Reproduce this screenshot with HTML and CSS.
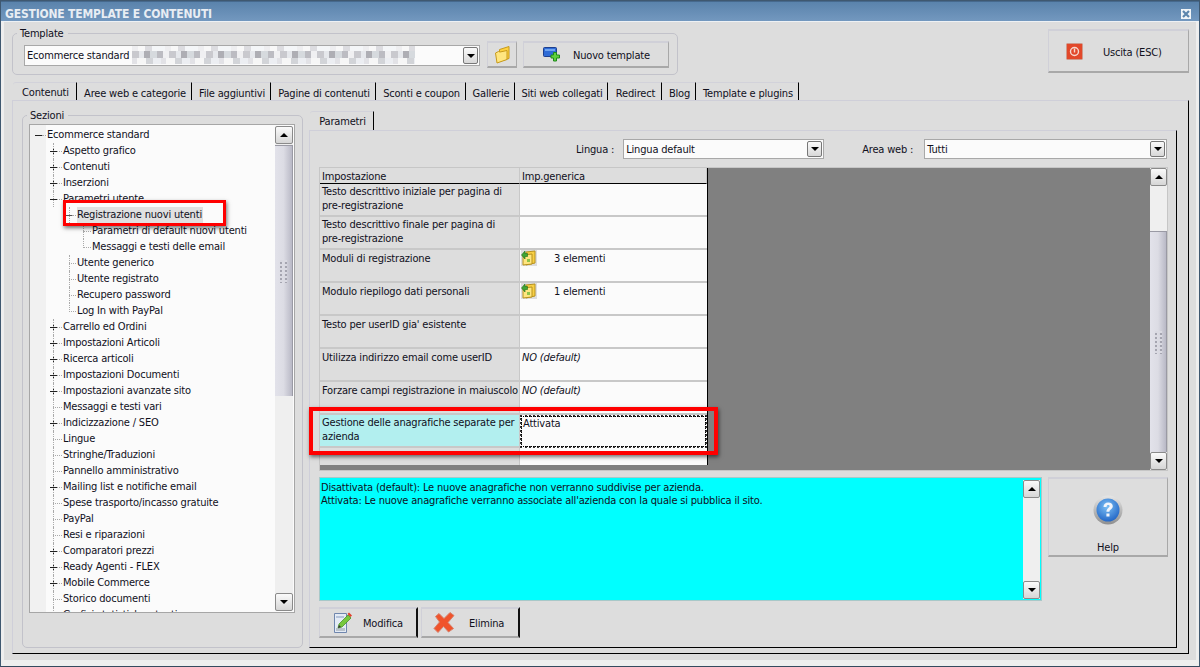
FILE: index.html
```html
<!DOCTYPE html>
<html lang="it">
<head>
<meta charset="utf-8">
<title>Gestione template e contenuti</title>
<link rel="stylesheet" href="styles.css">
</head>
<body>
<div class="window">
  <header class="titlebar">
    <span class="title">GESTIONE TEMPLATE E CONTENUTI</span>
    <span class="close"><svg width="10" height="10" viewBox="0 0 10 10"><path d="M2 2l6 6M8 2l-6 6" stroke="#5d86ad" stroke-width="2.2"/></svg></span>
  </header>
  <div class="client">
    <div class="toprow">
      <fieldset class="group template-group">
        <legend>Template</legend>
        <div class="template-row">
          <div class="combo template-combo">
            <span class="combo-text">Ecommerce standard</span>
            <span class="blur"></span>
            <span class="dd"><i class="arrow-down"></i></span>
          </div>
          <button class="btn folder-btn">
            <svg width="15" height="18" viewBox="0 0 15 18"><path d="M4.500 3.500l9.500-3v12l-9.500 3z" fill="#ffd23f" stroke="#c79a1c"/><path d="M0.500 7l3-1.500 1.500.5 7-1.500v9l-10 3.500z" fill="#ffe680" stroke="#c79a1c"/></svg>
          </button>
          <button class="btn new-btn">
            <svg width="19" height="15" viewBox="0 0 19 15"><rect x="0.500" y="0.500" width="13" height="9" rx="1" fill="#2e6bd6" stroke="#1d3f8f"/><rect x="2" y="2" width="10" height="2" fill="#6ea3f0"/><path d="M10.500 5.500h3v2.500h3v3h-3v3h-3v-3h-2.500v-3h2.500z" fill="#5fd03c" stroke="#1f8a1a"/></svg>
            <span>Nuovo template</span>
          </button>
        </div>
      </fieldset>
      <button class="btn exit-btn">
        <svg width="17" height="17" viewBox="0 0 17 17"><rect x="0.500" y="0.500" width="16" height="16" rx="1" fill="#e2482a" stroke="#cf9a8c"/><circle cx="8.500" cy="8.500" r="4" fill="none" stroke="#f7d9cf" stroke-width="1.400"/><path d="M8.500 5.500v4" stroke="#f7d9cf" stroke-width="1.400"/></svg>
        <span>Uscita (ESC)</span>
      </button>
    </div>

    <nav class="tabs main-tabs">
      <span class="tab active">Contenuti</span>
      <span class="tab">Aree web e categorie</span>
      <span class="tab">File aggiuntivi</span>
      <span class="tab">Pagine di contenuti</span>
      <span class="tab">Sconti e coupon</span>
      <span class="tab">Gallerie</span>
      <span class="tab">Siti web collegati</span>
      <span class="tab">Redirect</span>
      <span class="tab">Blog</span>
      <span class="tab">Template e plugins</span>
    </nav>

    <section class="page">
      <fieldset class="group sections">
        <legend>Sezioni</legend>
        <div class="tree-box">
          <ul class="tree">
            <li class="n l0 open">Ecommerce standard</li>
            <li class="n l1 plus">Aspetto grafico</li>
            <li class="n l1 plus">Contenuti</li>
            <li class="n l1 plus">Inserzioni</li>
            <li class="n l1 open">Parametri utente</li>
            <li class="n l2 open"><span class="selected">Registrazione nuovi utenti</span></li>
            <li class="n l3">Parametri di default nuovi utenti</li>
            <li class="n l3 last">Messaggi e testi delle email</li>
            <li class="n l2">Utente generico</li>
            <li class="n l2">Utente registrato</li>
            <li class="n l2">Recupero password</li>
            <li class="n l2 last">Log In with PayPal</li>
            <li class="n l1 plus">Carrello ed Ordini</li>
            <li class="n l1 plus">Impostazioni Articoli</li>
            <li class="n l1 plus">Ricerca articoli</li>
            <li class="n l1 plus">Impostazioni Documenti</li>
            <li class="n l1 plus">Impostazioni avanzate sito</li>
            <li class="n l1">Messaggi e testi vari</li>
            <li class="n l1 plus">Indicizzazione / SEO</li>
            <li class="n l1">Lingue</li>
            <li class="n l1">Stringhe/Traduzioni</li>
            <li class="n l1">Pannello amministrativo</li>
            <li class="n l1 plus">Mailing list e notifiche email</li>
            <li class="n l1">Spese trasporto/incasso gratuite</li>
            <li class="n l1">PayPal</li>
            <li class="n l1">Resi e riparazioni</li>
            <li class="n l1 plus">Comparatori prezzi</li>
            <li class="n l1 plus">Ready Agenti - FLEX</li>
            <li class="n l1 plus">Mobile Commerce</li>
            <li class="n l1">Storico documenti</li>
            <li class="n l1">Grafici statistiche utenti</li>
          </ul>
          <div class="sb tree-sb">
            <span class="sb-btn"><i class="arrow-up"></i></span>
            <span class="thumb tree-thumb"><i class="grip"></i></span>
            <span class="sb-rest"></span>
            <span class="sb-btn"><i class="arrow-down"></i></span>
          </div>
        </div>
      </fieldset>

      <div class="right">
        <nav class="tabs sub-tabs"><span class="tab active">Parametri</span></nav>
        <div class="subpage">
          <div class="filters">
            <label class="f-label lang-label">Lingua :</label>
            <div class="combo lang-combo"><span class="combo-text">Lingua default</span><span class="dd"><i class="arrow-down"></i></span></div>
            <label class="f-label area-label">Area web :</label>
            <div class="combo area-combo"><span class="combo-text">Tutti</span><span class="dd"><i class="arrow-down"></i></span></div>
          </div>

          <div class="gridbox">
            <div class="grid-area">
              <div class="table">
                <div class="th">Impostazione</div><div class="th">Imp.generica</div>
                <div class="k">Testo descrittivo iniziale per pagina di pre-registrazione</div><div class="v"></div>
                <div class="k">Testo descrittivo finale per pagina di pre-registrazione</div><div class="v"></div>
                <div class="k one">Moduli di registrazione</div>
                <div class="v has-icon"><span class="fold-ic"><svg width="16" height="16" viewBox="0 0 16 16"><path d="M5 2l9-1v12l-9 2z" fill="#f7cf45" stroke="#b8921e"/><path d="M2 5l9-1v10l-9 1z" fill="#ffe680" stroke="#b8921e"/><path d="M0.500 5l3.500-4v2.500h2.500v3H4v2.500z" fill="#3fa535" stroke="#1f6d1a" stroke-width=".6"/><rect x="6" y="9" width="3" height="3" fill="#8ec34a"/></svg></span><span class="count">3 elementi</span></div>
                <div class="k one">Modulo riepilogo dati personali</div>
                <div class="v has-icon"><span class="fold-ic"><svg width="16" height="16" viewBox="0 0 16 16"><path d="M5 2l9-1v12l-9 2z" fill="#f7cf45" stroke="#b8921e"/><path d="M2 5l9-1v10l-9 1z" fill="#ffe680" stroke="#b8921e"/><path d="M0.500 5l3.500-4v2.500h2.500v3H4v2.500z" fill="#3fa535" stroke="#1f6d1a" stroke-width=".6"/><rect x="6" y="9" width="3" height="3" fill="#8ec34a"/></svg></span><span class="count">1 elementi</span></div>
                <div class="k one">Testo per userID gia' esistente</div><div class="v"></div>
                <div class="k one">Utilizza indirizzo email come userID</div><div class="v one dflt">NO (default)</div>
                <div class="k one">Forzare campi registrazione in maiuscolo</div><div class="v one dflt">NO (default)</div>
                <div class="k hl">Gestione delle anagrafiche separate per azienda</div><div class="v focus">Attivata</div>
                <div class="k blank"></div><div class="v blank"></div>
              </div>
            </div>
            <div class="sb grid-sb">
              <span class="sb-btn"><i class="arrow-up"></i></span>
              <span class="sb-gap"></span>
              <span class="thumb grid-thumb"><i class="grip"></i></span>
              <span class="sb-btn"><i class="arrow-down"></i></span>
            </div>
          </div>

          <div class="lower">
            <div class="desc">
              <p class="desc-text">Disattivata (default): Le nuove anagrafiche non verranno suddivise per azienda.<br>Attivata: Le nuove anagrafiche verranno associate all'azienda con la quale si pubblica il sito.</p>
              <div class="sb desc-sb">
                <span class="sb-btn"><i class="arrow-up"></i></span>
                <span class="sb-rest"></span>
                <span class="sb-btn"><i class="arrow-down"></i></span>
              </div>
            </div>
            <button class="btn help-btn">
              <svg width="30" height="30" viewBox="0 0 30 30"><defs><radialGradient id="hg" cx="45%" cy="35%" r="70%"><stop offset="0" stop-color="#7cc0f5"/><stop offset="1" stop-color="#1f62c4"/></radialGradient><linearGradient id="hr" x1="0" y1="0" x2="0" y2="1"><stop offset="0" stop-color="#e6e6e6"/><stop offset="1" stop-color="#8f8f8f"/></linearGradient></defs><circle cx="15" cy="15" r="14.500" fill="url(#hr)"/><circle cx="15" cy="15" r="11.500" fill="url(#hg)"/><path d="M10.500 12c0-3 2-4.500 4.700-4.500 2.800 0 4.600 1.500 4.600 3.700 0 3.100-3.400 3-3.400 5.600h-3c0-3.700 3.200-3.800 3.200-5.500 0-.9-.6-1.400-1.500-1.400-1 0-1.500.6-1.600 2.100z" fill="#f2f5fb"/><rect x="13.400" y="18.500" width="3.100" height="3" fill="#f2f5fb"/></svg>
              <span>Help</span>
            </button>
          </div>

          <div class="actions">
            <button class="btn act-btn edit-btn">
              <svg width="20" height="23" viewBox="0 0 20 23"><path d="M1.500 2.500h12v19h-12z" fill="#e4ebf5" stroke="#6f86ad"/><rect x="3" y="5" width="8" height="2" fill="#b5c3da"/><rect x="3" y="17" width="9" height="3" fill="#b9c2cc"/><path d="M5 17l1-4 9-9 3 3-9 9z" fill="#77c83e" stroke="#3f8a1e" stroke-width=".7"/><path d="M14.500 3l1.500-1.500 3 3L17.500 6z" fill="#e0412b"/><path d="M5 17l1-3 2 2z" fill="#333"/></svg>
              <span>Modifica</span>
            </button>
            <button class="btn act-btn del-btn">
              <svg width="23" height="23" viewBox="0 0 23 23"><path d="M2.500 5.500l3.500-3 5 5 6-6 4 3-6 7 5.500 6-5 3.500-5-5.500-5.500 6-4-4 5.500-6.500z" fill="#f0532b" stroke="#d7806a" stroke-linejoin="round"/></svg>
              <span>Elimina</span>
            </button>
          </div>
        </div>
      </div>
    </section>
  </div>
</div>
<div class="mark mark-tree"></div>
<div class="mark mark-row"></div>
</body>
</html>
```

FILE: styles.css
```css
* { box-sizing: border-box; }
html, body { margin: 0; padding: 0; }
body {
  width: 1200px; height: 667px; overflow: hidden; position: relative;
  font: 11px/13px "DejaVu Sans Condensed", "DejaVu Sans", sans-serif;
  font-stretch: condensed;
  letter-spacing: -0.18px;
  color: #10101c; background: #ddd;
}
button { font: inherit; letter-spacing: inherit; color: inherit; padding: 0; }
ul { list-style: none; margin: 0; padding: 0; }
p { margin: 0; }
.window { width: 1200px; height: 667px; display: flex; flex-direction: column; border: 1px solid #3f5870; border-bottom-color: #34495e; background: #ddd; }
.titlebar { height: 21px; flex: none; display: flex; align-items: center; justify-content: space-between; padding: 5px 8px 0 4px; background: linear-gradient(#5a83ac, #7398bf); border-top: 1px solid #46698d; border-bottom: 1px solid #eef1f4; }
.title { color: #e8edf3; font-weight: 700; font-size: 12px; }
.close { width: 10px; height: 10px; background: #f2f5f8; display: flex; }
.client { flex: 1; border: solid #eee; border-width: 0 3px 6px 3px; display: flex; flex-direction: column; padding: 5px 7px 6px 8px; min-height: 0; }

.group { border: 1px solid #c2c2ca; border-radius: 5px; margin: 0; padding: 0; min-width: 0; }
.group legend { padding: 0 4px 0 3px; margin-left: 4px; line-height: 13px; }

.toprow { display: flex; justify-content: space-between; align-items: flex-start; height: 50px; flex: none; }
.template-group { width: 666px; height: 48px; }
.template-row { display: flex; align-items: center; padding: 1px 0 0 11px; }
.combo { display: flex; align-items: center; height: 21px; background: #fbfbfb; border: 1px solid #a8a8a8; padding-left: 2px; position: relative; }
.template-combo { width: 456px; margin-top: 2px; }
.combo-text { white-space: nowrap; }
.blur { flex: none; width: 283px; height: 18px; margin: -2px 0 0 3px; background:
  repeating-linear-gradient(90deg, #eeeef0 0 6px, #f8f8f8 6px 13px, #dcdce0 13px 20px, #f4f6f8 20px 33px) 0 0 / 100% 5px no-repeat,
  repeating-linear-gradient(90deg, #c9c9ce 0 7px, #e6e8ec 7px 12px, #aeaeb4 12px 18px, #d6dade 18px 25px, #bcbcc2 25px 31px, #f0f0f2 31px 37px) 0 5px / 100% 7px no-repeat,
  repeating-linear-gradient(90deg, #e2e2e6 0 5px, #f6f6f6 5px 14px, #d2d4d8 14px 21px, #eceef2 21px 29px) 0 12px / 100% 6px no-repeat;
}
.dd { position: absolute; right: 1px; top: 1px; width: 15px; height: 17px; display: flex; align-items: center; justify-content: center; background: linear-gradient(#fafafa, #d8d8d8); border: 1px solid #777; border-radius: 2px; }
.arrow-down, .arrow-up { display: block; width: 0; height: 0; border-left: 4px solid transparent; border-right: 4px solid transparent; }
.arrow-down { border-top: 4px solid #000; }
.arrow-up { border-bottom: 4px solid #000; }

.btn { background: #ddd; border: 1px solid; border-color: #d0d0d8 #a8a8a8 #a8a8a8 #d0d0d8; border-width: 2px 1px 2px 1px; display: flex; align-items: center; }
.folder-btn { width: 30px; height: 27px; margin-left: 7px; justify-content: center; }
.new-btn { width: 146px; height: 27px; margin-left: 6px; padding-left: 19px; gap: 11px; }
.new-btn span { margin-top: 2px; }
.exit-btn { width: 141px; height: 44px; margin-top: 2px; padding-left: 17px; gap: 20px; }
.exit-btn span { margin-top: 2px; }

.tabs { display: grid; flex: none; }
.main-tabs { height: 18px; margin-top: 5px; margin-left: 1px; grid-template-columns: 64px 115px 79px 105px 90px 49px 93px 54px 34px 103px; }
.tab { display: flex; align-items: center; justify-content: center; padding: 3px 0 0 2px; white-space: nowrap; border-right: 1px solid #000; border-top: 1px solid #d2d2da; border-radius: 3px 0 0 0; }
.tab.active { padding-top: 1px; }
.page { flex: 1; display: flex; padding: 8px 11px 5px 9px; border: 1px solid; border-color: #cfcfd9 #000 #000 #cfcfd9; gap: 6px; min-height: 0; width: 1177px; }
.sections { width: 281px; height: 539px; flex: none; position: relative; }
.tree-box { display: flex; height: 489px; margin: 2px 7px 0 6px; border: 1px solid #a6a6a6; background: #fbfbfb; overflow: hidden; }
.tree { flex: 1; padding-top: 2px; background: linear-gradient(90deg, #f1f1f1 16px, #fbfbfb 16px); overflow: hidden; }
.n { height: 16px; line-height: 16px; white-space: nowrap; position: relative; }
.l0 { padding-left: 17px; }
.l1 { padding-left: 33px; }
.l2 { padding-left: 47px; }
.l3 { padding-left: 62px; }
.n::after { content: ""; position: absolute; top: 8px; height: 0; border-top: 1px dotted #aaa; }
.n::before { content: ""; position: absolute; top: 0; height: 16px; width: 0; border-left: 1px dotted #aaa; }
.l0::after { left: 12px; width: 4px; }
.l0::before { display: none; }
.l1::after { left: 23px; width: 9px; }
.l1::before { left: 23px; }
.l1.plus::after, .l1.open::after { left: 27px; width: 5px; }
.l2::after { left: 39px; width: 7px; }
.l2::before { left: 39px; }
.l2.open::after { left: 42px; width: 4px; }
.l3::after { left: 53px; width: 8px; }
.l3::before { left: 53px; }
.last::before { height: 9px; }
.plus, .open { background-repeat: no-repeat; }
.l0.open { background-image: linear-gradient(#222,#222); background-size: 7px 1px; background-position: 5px 8px; }
.l1.open { background-image: linear-gradient(#222,#222); background-size: 7px 1px; background-position: 20px 8px; }
.l2.open { background-image: linear-gradient(#555,#555); background-size: 7px 1px; background-position: 35px 8px; }
.l1.plus { background-image: linear-gradient(#222,#222), linear-gradient(#222,#222); background-size: 7px 1px, 1px 7px; background-position: 20px 8px, 23px 5px; }
.selected { display: inline-block; background: #e0e0e0; padding: 0 1px 0 0; height: 16px; }

.sb { width: 18px; flex: none; display: flex; flex-direction: column; background: #efefef; }
.sb-btn { height: 18px; flex: none; display: flex; align-items: center; justify-content: center; background: linear-gradient(#fafafa, #d6d6d6); border: 1px solid #8a8a8a; border-radius: 2px; }
.sb-rest, .sb-gap { flex: 1; }
.thumb { display: flex; align-items: center; justify-content: center; background: linear-gradient(90deg, #e2e2ea, #dcdce4 50%, #b9b9c6); border: solid #9a9aa4; border-width: 1px 1px 0 0; flex: none; }
.tree-thumb { height: 251px; margin-top: 1px; }
.grid-thumb { height: 221px; }
.grip { display: block; width: 7px; height: 23px; background:
  repeating-linear-gradient(#dadae2 0 2px, transparent 2px 4px),
  repeating-linear-gradient(90deg, #a5a5b0 0 2px, transparent 2px 5px); }
.tree-sb { margin: 1px; height: 485px; }

.right { width: 868px; flex: none; margin-top: 2px; display: flex; flex-direction: column; }
.sub-tabs { height: 19px; grid-template-columns: 64px; margin-left: 1px; }
.subpage { flex: 1; border: 1px solid; border-color: #cfcfd9 #000 #000 #cfcfd9; padding: 8px 8px 0 9px; min-height: 0; }
.filters { display: flex; align-items: center; height: 20px; }
.f-label { white-space: nowrap; }
.lang-label { margin-left: 257px; }
.lang-combo { width: 201px; height: 20px; margin-left: 9px; }
.area-label { margin-left: 38px; }
.area-combo { width: 243px; height: 20px; margin-left: 11px; }
.filters .dd { height: 16px; }

.gridbox { display: flex; height: 304px; margin-top: 8px; width: 849px; border: 1px solid #c6c6c6; background: #808080; }
.grid-area { flex: 1; }
.table { display: grid; grid-template-columns: 200px 187px; grid-template-rows: 16px repeat(8, 33px) 17px; width: 388px; border-right: 1px solid #000; border-bottom: 1px solid #000; height: 297px; }
.th { padding: 2px 0 0 2px; border-bottom: 1px solid #000; border-right: 1px solid #c8c8c8; background: #ddd; height: 16px; }
.k, .v { padding: 1px 2px 0; line-height: 14px; border-bottom: 2px solid #c8c8c8; }
.k { background: #ddd; border-right: 1px solid #c8c8c8; }
.v { background: #fbfbfb; }
.k.one, .v.one { padding-top: 2px; white-space: nowrap; }
.has-icon { display: flex; align-items: flex-start; padding: 0 0 0 1px; }
.fold-ic { display: block; height: 16px; background: #ddd; }
.count { margin: 2px 0 0 17px; }
.dflt { font-style: italic; }
.k.hl { background: #b2efef; }
.focus { outline: 1px dotted #000; outline-offset: -2px; border: 2px dotted #333; padding: 0 0 0 1px; }
.blank { border-bottom: 0; }
.grid-sb { width: 17px; }

.lower { display: flex; gap: 6px; margin-top: 6px; align-items: flex-start; }
.desc { width: 723px; height: 124px; background: #0ff; border: 1px solid #a8c8c8; display: flex; justify-content: space-between; padding: 3px 0 0 1px; }
.desc-text { line-height: 13px; }
.desc-sb { width: 17px; height: 119px; margin: -1px 1px 0 0; }
.help-btn { width: 120px; height: 80px; flex-direction: column; justify-content: flex-end; padding-bottom: 1px; gap: 16px; }

.actions { display: flex; gap: 3px; margin-top: 6px; }
.act-btn { width: 99px; height: 31px; border-right: 2px solid #111; }
.act-btn span { margin-top: 2px; }
.edit-btn { padding-left: 13px; gap: 10px; }
.del-btn { padding-left: 11px; gap: 13px; }

.mark { position: absolute; border: 3px solid #f00; box-shadow: 1px 2px 4px rgba(0,0,0,.55); pointer-events: none; }
.mark-tree { left: 63px; top: 200px; width: 163px; height: 26px; }
.mark-row { left: 309px; top: 407px; width: 409px; height: 48px; border-width: 4px; }
```
